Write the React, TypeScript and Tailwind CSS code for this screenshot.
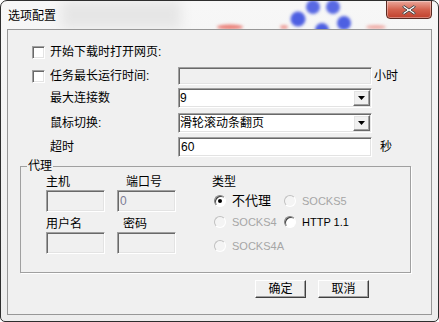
import React from "react";

const font = "font-['Liberation_Sans','Noto_Sans_CJK_SC',sans-serif]";
const sunken =
    "border border-t-[#a0a0a0] border-l-[#a0a0a0] border-b-white border-r-white shadow-[inset_1px_1px_0_#696969,inset_-1px_-1px_0_#e3e3e3]";
const raised =
    "border border-t-white border-l-white border-b-[#696969] border-r-[#696969] shadow-[inset_-1px_-1px_0_#a0a0a0,inset_1px_1px_0_#e3e3e3]";

function CheckBox() {
    return <div className={`${sunken} w-[13px] h-[13px] bg-white shrink-0`} />;
}

function Radio({ checked, disabled, label }: { checked?: boolean; disabled?: boolean; label: string }) {
    return (
        <div className="flex items-center h-[16px]">
            <div
                className={`w-[12px] h-[12px] rounded-full flex items-center justify-center shrink-0 border ${
                    disabled
                        ? "border-t-[#c0c0c0] border-l-[#c0c0c0] border-b-white border-r-white bg-[#f4f4f4]"
                        : "border-t-[#808080] border-l-[#808080] border-b-white border-r-white bg-white shadow-[inset_1px_1px_0_#404040]"
                }`}
            >
                {checked && <div className="w-[4px] h-[4px] rounded-full bg-black" />}
            </div>
            <span
                className={`ml-[6px] leading-[16px] whitespace-nowrap ${
                    disabled ? "text-[11px] text-[#a6a6a6]" : "text-black"
                } ${checked ? "text-[13px]" : "text-[11px]"}`}
            >
                {label}
            </span>
        </div>
    );
}

function Select({ value }: { value: string }) {
    return (
        <div className={`${sunken} w-[194px] h-[20px] bg-white flex items-center pl-[1px] pr-[1px]`}>
            <span className="flex-1 text-[12px] leading-[16px] text-black">{value}</span>
            <div className={`${raised} w-[17px] h-[16px] bg-[#f0f0f0] flex items-center justify-center`}>
                <svg width="7" height="4" viewBox="0 0 7 4">
                    <path d="M0 0H7L3.5 4Z" fill="#000" />
                </svg>
            </div>
        </div>
    );
}

function Button({ children }: { children: React.ReactNode }) {
    return (
        <div
            className={`w-[51px] h-[18px] bg-[#f0f0f0] flex items-center justify-center text-[12px] leading-[16px] border border-t-white border-l-white border-b-[#404040] border-r-[#404040] shadow-[inset_-1px_-1px_0_#a0a0a0]`}
        >
            {children}
        </div>
    );
}

function TitleBar() {
    return (
        <div className="relative h-[28px] flex items-center pl-[7px] overflow-hidden">
            <svg className="absolute left-0 top-0" width="437" height="28" viewBox="0 0 437 28">
                <defs>
                    <filter id="blur" x="-50%" y="-50%" width="200%" height="200%">
                        <feGaussianBlur stdDeviation="1.6" />
                    </filter>
                    <filter id="soft" x="-50%" y="-50%" width="200%" height="200%">
                        <feGaussianBlur stdDeviation="6" />
                    </filter>
                </defs>
                <rect x="60" y="0" width="120" height="28" fill="#e6e6e6" filter="url(#soft)" />
                <g filter="url(#blur)">
                    <ellipse cx="229" cy="26" rx="13" ry="2.5" fill="#e9645a" opacity="0.8" />
                    <ellipse cx="283" cy="26" rx="4" ry="2" fill="#e9645a" opacity="0.6" />
                    <ellipse cx="375" cy="26" rx="10" ry="2" fill="#eb7a70" opacity="0.6" />
                    <circle cx="297" cy="18" r="7.5" fill="#3c4fe0" opacity="0.9" />
                    <circle cx="312" cy="6" r="7" fill="#3c4fe0" opacity="0.85" />
                    <circle cx="332" cy="6" r="7" fill="#3c4fe0" opacity="0.85" />
                    <circle cx="343" cy="22" r="7" fill="#3c4fe0" opacity="0.9" />
                    <circle cx="321" cy="29" r="7" fill="#3c4fe0" opacity="0.9" />
                </g>
            </svg>
            <span className="relative text-[12px] leading-[16px] text-black mt-[1px]">选项配置</span>
            <div className="absolute top-[-1px] right-[6px] w-[46px] h-[19px] rounded-b-[4px] border border-[#5a2a22] bg-gradient-to-b from-[#eaa89c] via-[#d4634f] to-[#c0402c] shadow-[inset_0_0_0_1px_rgba(255,255,255,0.35)] flex items-center justify-center">
                <svg width="16" height="12" viewBox="0 0 16 12">
                    <path
                        d="M3 1.5L8 5 13 1.5 14.5 3 10 6 14.5 9 13 10.5 8 7 3 10.5 1.5 9 6 6 1.5 3Z"
                        fill="#fff"
                        stroke="#4a4a4a"
                        strokeWidth="1"
                        strokeLinejoin="round"
                    />
                </svg>
            </div>
        </div>
    );
}

export default function App() {
    return (
        <div
            className={`${font} w-[439px] h-[322px] bg-gradient-to-b from-[#f7f7f7] to-[#ededed] border border-[#2e2e2e] rounded-t-[7px] rounded-b-[5px] flex flex-col overflow-hidden`}
        >
            <TitleBar />
            <div className="mx-[6px] h-[286px] border border-[#979797] bg-[#f0f0f0] flex flex-col text-[12px] leading-[16px] text-black">
                <div className="flex items-center h-[16px] mt-[14px] pl-[24px]">
                    <CheckBox />
                    <span className="ml-[5px]">开始下载时打开网页:</span>
                </div>
                <div className="flex items-center h-[18px] mt-[7px] pl-[24px]">
                    <div className="w-[146px] flex items-center">
                        <CheckBox />
                        <span className="ml-[5px]">任务最长运行时间:</span>
                    </div>
                    <div className={`${sunken} w-[194px] h-[18px] bg-[#f0f0f0]`} />
                    <span className="ml-[2px]">小时</span>
                </div>
                <div className="flex items-center h-[20px] mt-[3px] pl-[42px]">
                    <span className="w-[128px]">最大连接数</span>
                    <Select value="9" />
                </div>
                <div className="flex items-center h-[20px] mt-[5px] pl-[42px]">
                    <span className="w-[128px]">鼠标切换:</span>
                    <Select value="滑轮滚动条翻页" />
                </div>
                <div className="flex items-center h-[20px] mt-[4px] pl-[42px]">
                    <span className="w-[128px]">超时</span>
                    <div className={`${sunken} w-[194px] h-[20px] bg-white flex items-center pl-[2px]`}>60</div>
                    <span className="ml-[8px]">秒</span>
                </div>

                <fieldset className="ml-[12px] mt-[1px] w-[391px] h-[115px] border border-[#a0a0a0] shadow-[1px_1px_0_#fff] flex">
                    <legend className="ml-[6px] px-[1px] leading-[16px]">代理</legend>
                    <div className="flex pl-[25px] pt-[1px]">
                        <div className="grid grid-cols-[59px_59px] gap-x-[12px]">
                            <span className="h-[15px] leading-[15px]">主机</span>
                            <span className="h-[15px] leading-[15px] pl-[9px]">端口号</span>
                            <div className={`${sunken} h-[22px] bg-[#f0f0f0]`} />
                            <div className={`${sunken} h-[22px] bg-[#f0f0f0] flex items-center pl-[2px] text-[#7c7c94]`}>0</div>
                            <span className="h-[16px] mt-[4px]">用户名</span>
                            <span className="h-[16px] mt-[4px] pl-[6px]">密码</span>
                            <div className={`${sunken} h-[22px] bg-[#f0f0f0]`} />
                            <div className={`${sunken} h-[22px] bg-[#f0f0f0]`} />
                        </div>
                        <div className="ml-[36px] flex flex-col">
                            <span className="h-[16px] -mt-[1px]">类型</span>
                            <div className="grid grid-cols-[70px_80px] pl-[2px] mt-[3px]">
                                <Radio checked label="不代理" />
                                <Radio disabled label="SOCKS5" />
                            </div>
                            <div className="grid grid-cols-[70px_80px] pl-[2px] mt-[5px]">
                                <Radio disabled label="SOCKS4" />
                                <Radio label="HTTP 1.1" />
                            </div>
                            <div className="grid grid-cols-[70px_80px] pl-[2px] mt-[8px]">
                                <Radio disabled label="SOCKS4A" />
                            </div>
                        </div>
                    </div>
                </fieldset>

                <div className="flex justify-end gap-[12px] pr-[62px] mt-[7px]">
                    <Button>确定</Button>
                    <Button>取消</Button>
                </div>
            </div>
        </div>
    );
}
